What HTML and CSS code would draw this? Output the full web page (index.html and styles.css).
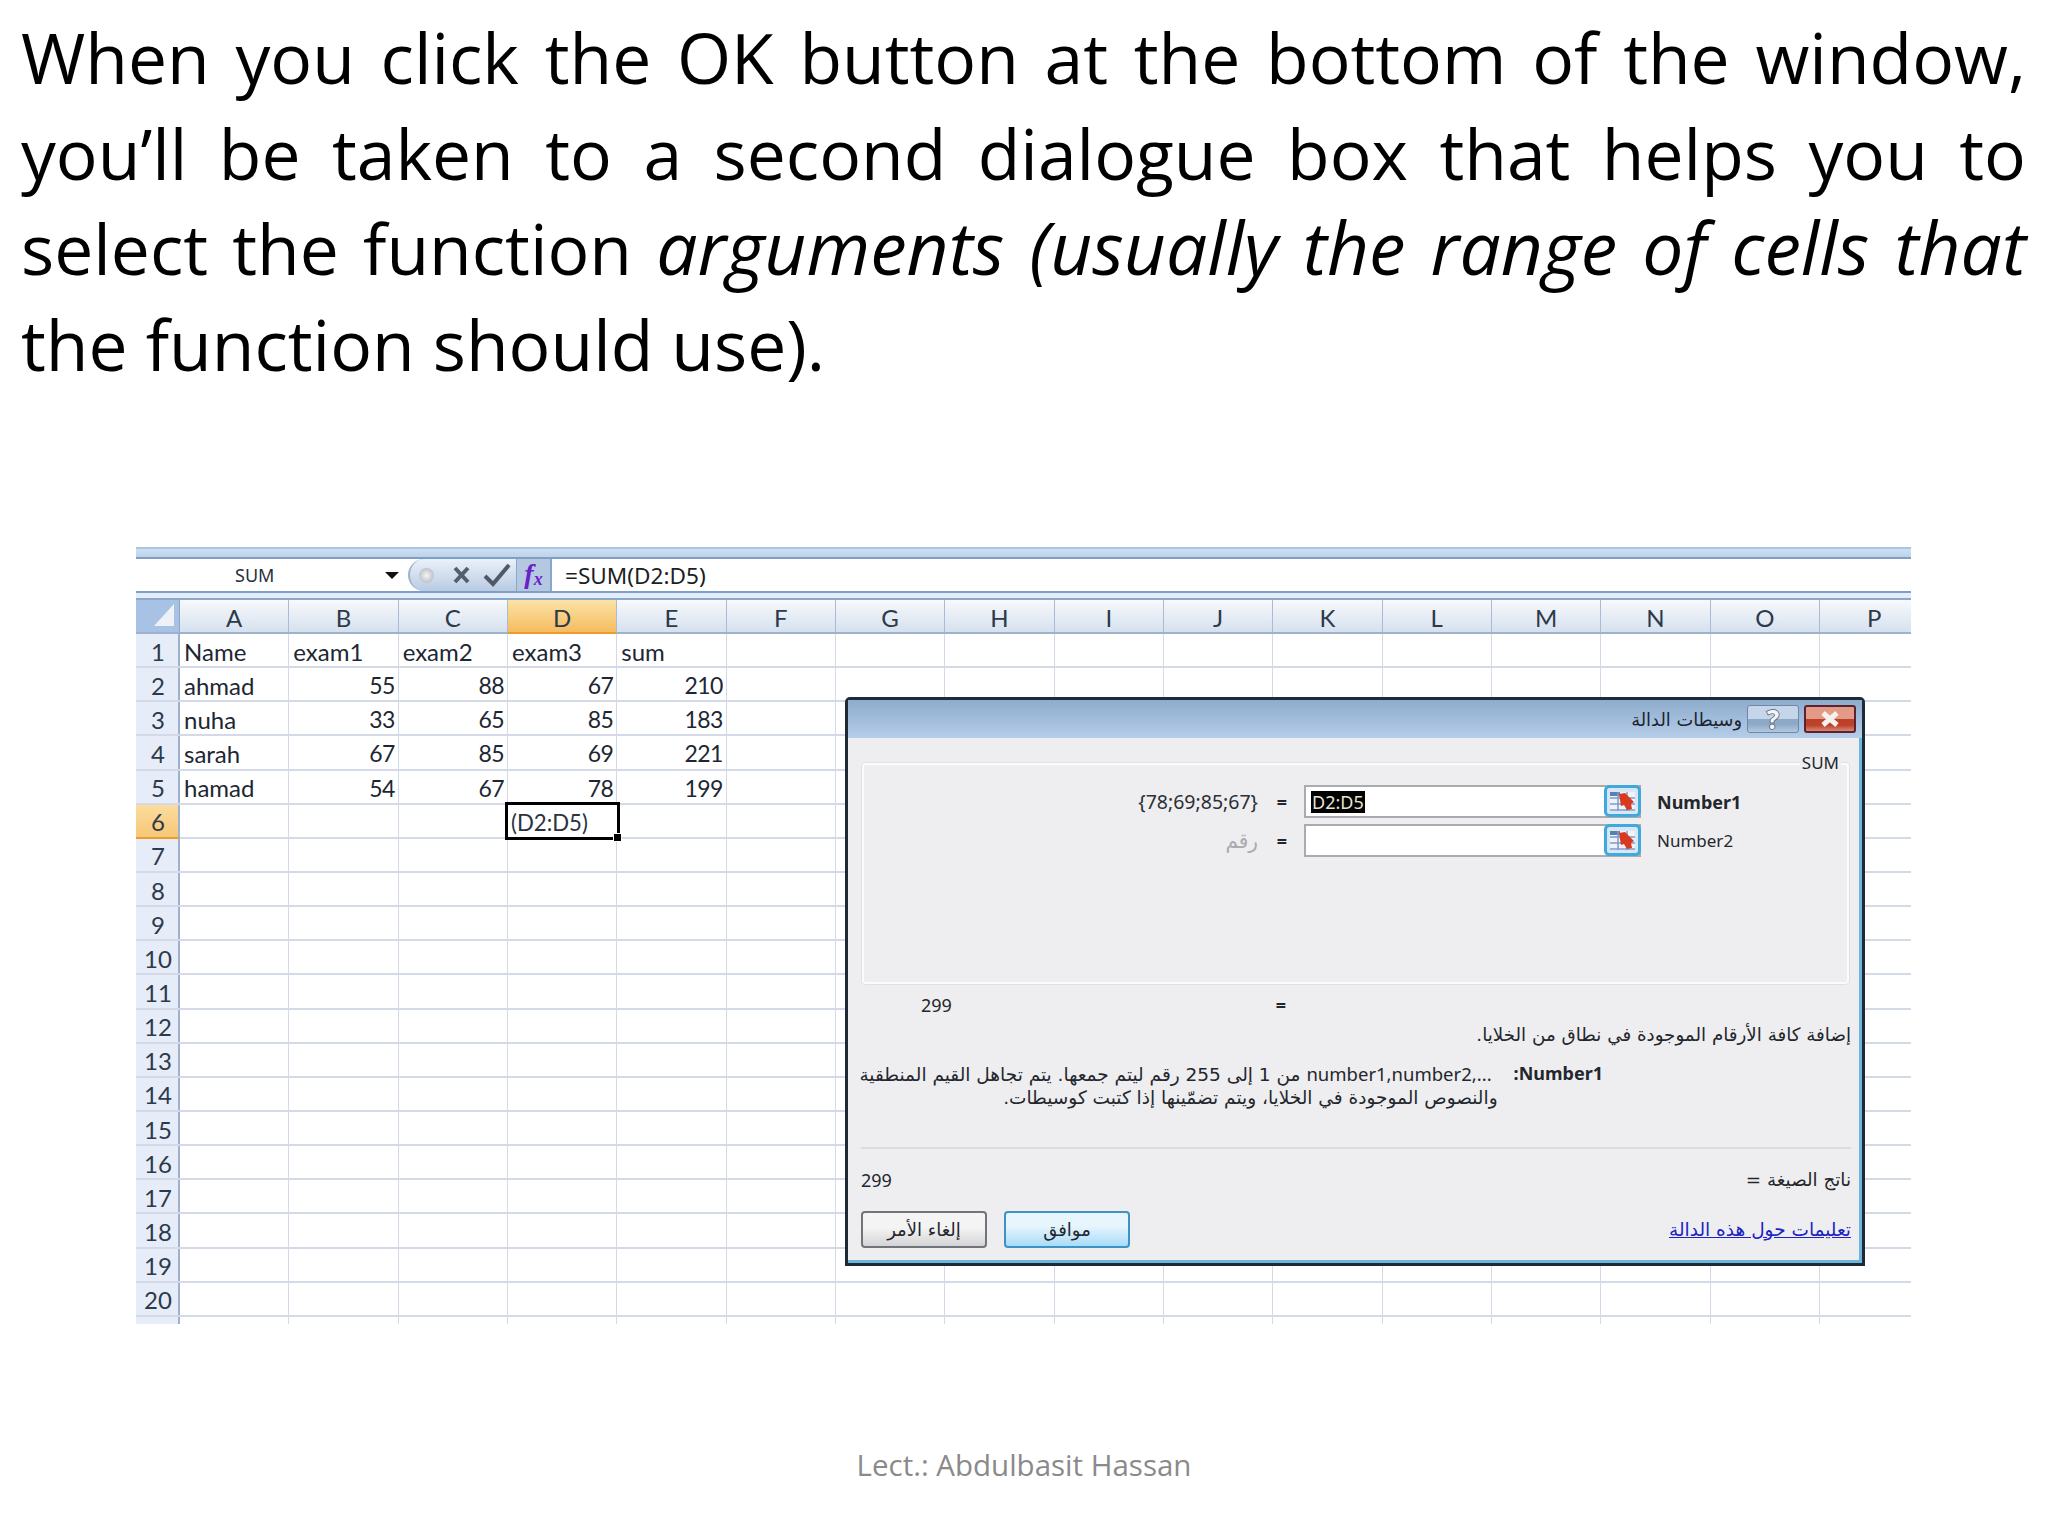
FILE: index.html
```html
<!DOCTYPE html>
<html lang="en">
<head>
<meta charset="utf-8">
<title>Function arguments</title>
<link rel="stylesheet" href="styles.css">
</head>
<body>
<main class="slide">
  <p class="lead">
    <span class="lead-line">When you click the OK button at the bottom of the window,</span>
    <span class="lead-line">you’ll be taken to a second dialogue box that helps you to</span>
    <span class="lead-line">select the function <em>arguments (usually the range of cells that</em></span>
    <span class="lead-line last">the function should use).</span>
  </p>

  <section class="sheet">
    <div class="ribbon-edge"></div>
    <div class="formula-bar">
      <div class="name-box"><span class="name-text">SUM</span><span class="name-arrow"></span></div>
      <div class="fx-group">
        <span class="fx-dot"></span>
        <svg class="fx-icon" width="24" height="24" viewBox="0 0 24 24"><path d="M5 5l13 14M18 5L5 19" fill="none" stroke="#555f6b" stroke-width="4"/></svg>
        <svg class="fx-icon" width="30" height="26" viewBox="0 0 30 26"><path d="M3 14l8 8L27 3" fill="none" stroke="#4f5a66" stroke-width="4"/></svg>
        <span class="fx-button">f<sub>x</sub></span>
      </div>
      <div class="formula-input">=SUM(D2:D5)</div>
    </div>
    <div class="bar-gap"></div>

    <div class="col-heads">
      <span class="corner"><span class="corner-tri"></span></span>
      <span class="col">A</span><span class="col">B</span><span class="col">C</span><span class="col on">D</span><span class="col">E</span><span class="col">F</span><span class="col">G</span><span class="col">H</span><span class="col">I</span><span class="col">J</span><span class="col">K</span><span class="col">L</span><span class="col">M</span><span class="col">N</span><span class="col">O</span><span class="col">P</span>
    </div>

    <div class="row"><span class="rh">1</span><span class="c">Name</span><span class="c">exam1</span><span class="c">exam2</span><span class="c">exam3</span><span class="c">sum</span></div>
    <div class="row"><span class="rh">2</span><span class="c">ahmad</span><span class="c n">55</span><span class="c n">88</span><span class="c n">67</span><span class="c n">210</span></div>
    <div class="row"><span class="rh">3</span><span class="c">nuha</span><span class="c n">33</span><span class="c n">65</span><span class="c n">85</span><span class="c n">183</span></div>
    <div class="row"><span class="rh">4</span><span class="c">sarah</span><span class="c n">67</span><span class="c n">85</span><span class="c n">69</span><span class="c n">221</span></div>
    <div class="row"><span class="rh">5</span><span class="c">hamad</span><span class="c n">54</span><span class="c n">67</span><span class="c n">78</span><span class="c n">199</span></div>
    <div class="row"><span class="rh on">6</span><span class="c"></span><span class="c"></span><span class="c"></span><span class="c active">(D2:D5)<span class="handle"></span></span></div>
    <div class="row"><span class="rh">7</span></div>
    <div class="row"><span class="rh">8</span></div>
    <div class="row"><span class="rh">9</span></div>
    <div class="row"><span class="rh">10</span></div>
    <div class="row"><span class="rh">11</span></div>
    <div class="row"><span class="rh">12</span></div>
    <div class="row"><span class="rh">13</span></div>
    <div class="row"><span class="rh">14</span></div>
    <div class="row"><span class="rh">15</span></div>
    <div class="row"><span class="rh">16</span></div>
    <div class="row"><span class="rh">17</span></div>
    <div class="row"><span class="rh">18</span></div>
    <div class="row"><span class="rh">19</span></div>
    <div class="row"><span class="rh">20</span></div>
    <div class="row stub"><span class="rh"></span></div>

    <div class="dialog">
      <header class="dlg-title">
        <span class="dlg-title-text" dir="rtl">وسيطات الدالة</span>
        <span class="win-btn help">?</span>
        <span class="win-btn close"><svg width="24" height="18" viewBox="0 0 24 18"><path d="M5 3l14 12M19 3L5 15" fill="none" stroke="#f4f1ee" stroke-width="5"/></svg></span>
      </header>
      <div class="dlg-body">
        <div class="group">
          <span class="legend">SUM</span>
          <div class="arg-row">
            <span class="arg-val">{78;69;85;67}</span>
            <span class="eq">=</span>
            <span class="arg-input"><span class="selected">D2:D5</span>
              <svg class="range-btn" width="37" height="32" viewBox="0 0 37 32"><rect x="1.5" y="1.5" width="34" height="29" rx="4" fill="#d8e6f6" stroke="#3fa9dc" stroke-width="3"/><path d="M6 7h25v19H6z" fill="#eef3fa"/><path d="M6 7h10v4H6z" fill="#5b7fb4"/><path d="M6 13h25M6 19h25M6 25h25M14 7v19M23 7v19" stroke="#7f9ccb" stroke-width="1.5"/><path d="M15 9l6-1 9 9-3 2 1 5-5 1-3-5-3 1z" fill="#d8391f"/></svg>
            </span>
            <span class="arg-name bold">Number1</span>
          </div>
          <div class="arg-row">
            <span class="arg-val hint" dir="rtl">رقم</span>
            <span class="eq">=</span>
            <span class="arg-input">
              <svg class="range-btn" width="37" height="32" viewBox="0 0 37 32"><rect x="1.5" y="1.5" width="34" height="29" rx="4" fill="#d8e6f6" stroke="#3fa9dc" stroke-width="3"/><path d="M6 7h25v19H6z" fill="#eef3fa"/><path d="M6 7h10v4H6z" fill="#5b7fb4"/><path d="M6 13h25M6 19h25M6 25h25M14 7v19M23 7v19" stroke="#7f9ccb" stroke-width="1.5"/><path d="M15 9l6-1 9 9-3 2 1 5-5 1-3-5-3 1z" fill="#d8391f"/></svg>
            </span>
            <span class="arg-name light">Number2</span>
          </div>
        </div>

        <div class="value-row"><span class="value">299</span><span class="eq">=</span></div>
        <p class="desc" dir="rtl">إضافة كافة الأرقام الموجودة في نطاق من الخلايا.</p>

        <div class="detail">
          <div class="detail-text">
            <p class="detail-line" dir="rtl"><bdi dir="ltr" class="latin">number1,number2,...</bdi> من 1 إلى 255 رقم ليتم جمعها. يتم تجاهل القيم المنطقية</p>
            <p class="detail-line second" dir="rtl">والنصوص الموجودة في الخلايا، ويتم تضمّينها إذا كتبت كوسيطات.</p>
          </div>
          <span class="detail-name">:Number1</span>
        </div>

        <div class="rule"></div>
        <div class="result-row"><span>299</span><span dir="rtl">ناتج الصيغة =</span></div>
        <div class="foot-row">
          <span class="btn">إلغاء الأمر</span>
          <span class="btn primary">موافق</span>
          <a class="help-link" href="#" dir="rtl">تعليمات حول هذه الدالة</a>
        </div>
      </div>
    </div>
  </section>

  <footer class="credit">Lect.: Abdulbasit Hassan</footer>
</main>
</body>
</html>
```
FILE: styles.css
```css
* { box-sizing: border-box; }
html, body { margin: 0; padding: 0; background: #fff; }
body { font-family: "Lato", "DejaVu Sans", sans-serif; color: #000; }
p { margin: 0; }

.slide { width: 2048px; height: 1536px; display: flex; flex-direction: column; overflow: hidden; position: relative; }

.lead { height: 547px; padding: 10px 22px 0 21px; font-family: "Open Sans", "DejaVu Sans", sans-serif; font-size: 69.6px; line-height: 95.5px; color: #000; }
.lead-line { display: block; text-align: justify; text-align-last: justify; white-space: nowrap; }
.lead-line.last { text-align-last: left; }
.lead em { font-style: italic; font-size: 1.05em; line-height: 0; }

.sheet { position: relative; width: 1775px; margin-left: 136px; overflow: hidden; font-family: "Lato", "DejaVu Sans", sans-serif; font-size: 24px; color: #1d2733; }

.ribbon-edge { height: 10px; background: linear-gradient(#a9c6e2 0 2px, #cfe0f2 2px, #bcd3ea); }

.formula-bar { height: 36px; display: flex; border-top: 2px solid #7f9fc4; border-bottom: 2px solid #7f9fc4; background: #fff; }
.name-box { width: 272px; display: flex; align-items: center; padding-left: 99px; font-family: "Noto Sans", sans-serif; font-size: 18px; color: #26303b; }
.name-text { width: 150px; }
.name-arrow { width: 0; height: 0; border-left: 7px solid transparent; border-right: 7px solid transparent; border-top: 7px solid #111; }
.fx-group { width: 142px; display: flex; align-items: center; gap: 8px; padding-left: 40px; position: relative; border-radius: 20px 0 0 20px; background: linear-gradient(#eaf1f9, #b9cbe3); border-left: 2px solid #9cb3cf; }
.fx-dot { position: absolute; left: 9px; top: 9px; width: 15px; height: 15px; border-radius: 50%; background: radial-gradient(#f4f4f4, #a9adb4); }
.fx-icon { flex: none; }
.fx-button { position: absolute; right: 0; top: 0; bottom: 0; width: 34px; text-align: center; background: #b4c8e2; border-left: 1px solid #8ea8c9; font-family: "Liberation Serif", serif; font-style: italic; font-weight: 700; font-size: 28px; line-height: 30px; color: #6b21c8; }
.fx-button sub { font-size: 18px; line-height: 0; vertical-align: -2px; }
.formula-input { flex: 1; display: flex; align-items: center; padding-left: 13px; border-left: 2px solid #8ba7c8; font-family: "Noto Sans", sans-serif; font-size: 22.6px; color: #1b1f26; }

.bar-gap { height: 7px; background: #e3edf9; border-bottom: 2px solid #8ba7c8; }

.col-heads { height: 34px; display: grid; grid-template-columns: 44px repeat(16, 109.33px); border-bottom: 2px solid #9db2cd; background: linear-gradient(#f7f9fc, #d6e1ee); }
.corner { background: #a8c2e6; border-right: 1px solid #8ba7c8; display: flex; align-items: flex-end; justify-content: flex-end; padding: 0 5px 6px 0; }
.corner-tri { width: 0; height: 0; border-left: 20px solid transparent; border-bottom: 22px solid #eef2f8; }
.col { display: flex; align-items: center; justify-content: center; padding-top: 3px; border-right: 1px solid #a9bcd4; color: #2c3a4b; }
.col.on { background: linear-gradient(#fbe3a5, #f5bc60); border-bottom: 2px solid #ee9b2c; margin-bottom: -2px; }

.row { height: 34.15px; display: grid; grid-template-columns: 44px repeat(16, 109.33px); border-bottom: 2px solid #d4d9e8; position: relative; background-image: repeating-linear-gradient(to right, transparent 0 108.33px, #d4d9e8 108.33px 109.33px); background-position: 44px 0; background-repeat: repeat-x; background-size: 100% 100%; }
.rh { display: flex; align-items: center; justify-content: center; padding: 2px 0 0 2px; background: #e6edf8; border-right: 2px solid #9db2cd; color: #2c3a4b; }
.rh.on { background: linear-gradient(#fbdc9e, #f7c777); border-bottom: 2px solid #ee9b2c; margin-bottom: -2px; }
.c { display: flex; align-items: center; padding: 2px 4px 0; white-space: nowrap; }
.c.n { justify-content: flex-end; padding-right: 4px; font-size: 23px; letter-spacing: -0.6px; }
.c.active { position: relative; outline: 3px solid #000; outline-offset: 0; padding: 4px 3px 0; background: #fff; color: #2a3340; z-index: 1; font-size: 22.2px; }
.handle { position: absolute; right: -5px; bottom: -5px; width: 7px; height: 7px; background: #000; border: 1px solid #fff; box-sizing: content-box; }
.row.stub { height: 7px; border-bottom: 0; }

.dialog { position: absolute; left: 709px; top: 150px; width: 1020px; height: 569px; display: flex; flex-direction: column; background: #eeeef0; border: 3px solid #1e2a36; border-radius: 5px 5px 0 0; box-shadow: inset -3px -3px 0 #6bb7dc; font-family: "Noto Sans", "DejaVu Sans", sans-serif; font-size: 18px; color: #23272d; }

.dlg-title { height: 38px; flex: none; display: flex; align-items: center; justify-content: flex-end; gap: 5px; padding: 0 6px 0 0; background: linear-gradient(#8eaccd, #b5cde8); }
.dlg-title-text { font-family: "DejaVu Sans", sans-serif; font-size: 17.8px; color: #1b2430; }
.win-btn { width: 52px; height: 28px; display: flex; align-items: center; justify-content: center; border-radius: 3px; }
.help { background: linear-gradient(#c6d6ea 0 50%, #8ea9c8 50% 70%, #b4c9e0); border: 1px solid #6f87a4; color: #f2f4f7; font-size: 26px; font-weight: 700; -webkit-text-stroke: 1.5px #4a5766; paint-order: stroke fill; }
.close { background: linear-gradient(#e39a87 0 50%, #bd4028 50% 75%, #d88a74); border: 2px solid #5d2230; }

.dlg-body { flex: 1; display: flex; flex-direction: column; padding: 25px 11px 0 13px; }

.group { height: 221px; position: relative; padding-top: 20px; margin: 0 2px 0 1px; border: 2px solid #fbfbfc; border-radius: 4px; box-shadow: 0 0 0 1px #e0e0e3; }
.legend { position: absolute; right: 6px; top: -14px; padding: 0 2px; background: #eeeef0; font-size: 17px; }
.arg-row { height: 33px; margin-bottom: 6px; display: grid; grid-template-columns: 396px 44px 337px auto; align-items: center; }
.arg-val { text-align: right; padding-right: 2px; font-size: 19.5px; color: #2b2f36; }
.hint { font-family: "DejaVu Sans", sans-serif; font-size: 20px; color: #a9a9ad; padding: 0 2px 0 0; }
.eq { text-align: center; font-weight: 700; }
.arg-input { height: 33px; position: relative; display: flex; align-items: center; padding-left: 5px; background: #fff; border: 2px solid #a9abae; }
.selected { background: #000; color: #e9e3d2; line-height: 22px; padding: 0 1px; }
.range-btn { position: absolute; right: -2px; top: -2px; }
.arg-name { padding-left: 16px; }
.arg-name.light { font-size: 17px; }
.bold { font-weight: 700; }

.value-row { height: 40px; padding-top: 1px; display: grid; grid-template-columns: 398px 44px; align-items: center; }
.value { padding-left: 60px; }
.desc { height: 24px; text-align: right; line-height: 24px; margin-top: -1px; font-size: 18.3px; font-family: "DejaVu Sans", sans-serif; white-space: nowrap; }

.detail { margin-top: 15px; display: flex; justify-content: flex-end; padding-right: 248px; gap: 22px; }
.detail-text { width: 632px; font-family: "DejaVu Sans", sans-serif; font-size: 18.5px; }
.latin { font-family: "Noto Sans", sans-serif; }
.detail-line { line-height: 23px; white-space: nowrap; }
.detail-line:first-child { text-align: justify; text-align-last: justify; }
.detail-line.second { margin-right: -6px; }
.detail-name { font-weight: 700; line-height: 23px; }

.rule { height: 2px; margin-top: 38px; background: #dcdcdf; }
.result-row { height: 61.5px; display: flex; justify-content: space-between; align-items: center; }
.result-row [dir] { font-family: "DejaVu Sans", sans-serif; font-size: 18.3px; }

.foot-row { display: flex; align-items: center; gap: 17px; }
.btn { width: 126px; height: 37px; display: flex; align-items: center; justify-content: center; border: 2px solid #70757c; border-radius: 4px; background: linear-gradient(#f4f4f4 0 45%, #d4d4d6); font-family: "DejaVu Sans", sans-serif; font-size: 18px; }
.btn.primary { border-color: #3e93c6; background: linear-gradient(#e7f5fd 0 40%, #a8dcf9); }
.help-link { margin-left: auto; color: #1c22c4; font-family: "DejaVu Sans", sans-serif; font-size: 18.5px; text-decoration: underline; }

.credit { position: absolute; left: 0; right: 0; top: 1444px; text-align: center; font-family: "Open Sans", sans-serif; font-size: 29.5px; line-height: 42px; color: #8a8a8a; }
```
